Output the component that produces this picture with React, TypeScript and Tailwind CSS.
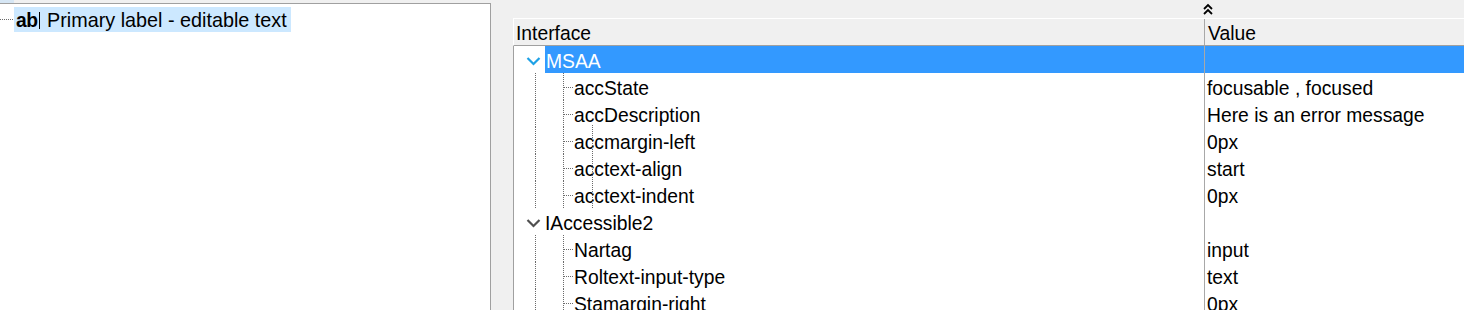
import React from "react";

const FONT = { fontFamily: '"Liberation Sans", Arial, sans-serif' };

function ChildLines() {
  return (
    <svg width="60" height="27" className="shrink-0 block">
      <line x1="21.5" y1="0" x2="21.5" y2="27" stroke="#6b6b6b" strokeWidth="1" strokeDasharray="1 1" />
      <line x1="49.5" y1="0" x2="49.5" y2="27" stroke="#6b6b6b" strokeWidth="1" strokeDasharray="1 1" />
      <line x1="50" y1="14.5" x2="59" y2="14.5" stroke="#6b6b6b" strokeWidth="1" strokeDasharray="1 1" />
    </svg>
  );
}

function ParentIcon({ color }: { color: string }) {
  return (
    <svg width="31" height="27" className="shrink-0 block">
      <polyline points="13.5,12 19.5,18 25.5,12" fill="none" stroke={color} strokeWidth="2.2" />
    </svg>
  );
}

const children1 = [
  ["accState", "focusable , focused"],
  ["accDescription", "Here is an error message"],
  ["accmargin-left", "0px"],
  ["acctext-align", "start"],
  ["acctext-indent", "0px"],
];
const children2 = [
  ["Nartag", "input"],
  ["Roltext-input-type", "text"],
  ["Stamargin-right", "0px"],
];

function ChildRow({ label, value }: { label: string; value: string }) {
  return (
    <div className="flex h-[27px] shrink-0 items-center">
      <ChildLines />
      <div className="w-[630px] shrink-0 pt-[5px] text-black">{label}</div>
      <div className="w-px h-full bg-[#a8a8a8] shrink-0" />
      <div className="pl-[2px] pt-[5px] text-black">{value}</div>
    </div>
  );
}

export default function App() {
  return (
    <div
      className="w-[1464px] h-[310px] bg-[#f0f0f0] overflow-hidden flex text-[19.3px] leading-none"
      style={FONT}
    >
      {/* Left panel */}
      <div className="w-[491px] shrink-0 flex flex-col">
        <div className="h-[3px] shrink-0 flex">
          <div className="w-[14px] bg-[#d6e6f4]" />
        </div>
        <div className="flex-1 bg-white border-t border-r border-[#a0a0a0] pt-[3px]">
          <div className="flex items-center h-[25px]">
            <svg width="14" height="25" className="shrink-0 block">
              <line x1="0" y1="12.5" x2="14" y2="12.5" stroke="#6b6b6b" strokeWidth="1" strokeDasharray="1 1" />
            </svg>
            <div className="h-full w-[277px] bg-[#cce8ff] flex items-center pl-[2px] pt-[2px]">
              <span className="font-bold tracking-[-0.5px]">ab</span>
              <span className="ml-[1px] w-[1.5px] h-[17px] bg-black" />
              <span className="ml-[7px] text-black text-[19.8px]">Primary label - editable text</span>
            </div>
          </div>
        </div>
      </div>

      <div className="w-[22px] shrink-0" />

      {/* Right panel */}
      <div className="flex-1 flex flex-col min-h-0">
        <div className="h-[18px] shrink-0 pl-[689px] pt-[3px]">
          <svg width="12" height="13" className="block">
            <polyline points="2,6 6,2 10,6" fill="none" stroke="#000" strokeWidth="1.8" />
            <polyline points="2,11 6,7 10,11" fill="none" stroke="#000" strokeWidth="1.8" />
          </svg>
        </div>
        <div className="h-[28px] shrink-0 flex border-t border-white border-b border-b-[#a0a0a0] bg-[#f0f0f0] border-l border-l-white">
          <div className="w-[690px] shrink-0 flex items-center pl-[2px] pt-[3px] text-black">Interface</div>
          <div className="w-px bg-[#a8a8a8] shrink-0" />
          <div className="flex items-center pl-[3px] pt-[3px] text-black">Value</div>
        </div>
        <div className="relative flex-1 min-h-0 overflow-hidden bg-white border-l border-[#a0a0a0]">
          {/* MSAA */}
          <div className="flex h-[27px] items-center">
            <ParentIcon color="#1ea1e6" />
            <div className="flex-1 h-full bg-[#3399ff] flex items-center text-white">
              <div className="w-[659px] shrink-0 pl-[1px] pt-[4px]">MSAA</div>
              <div className="w-px h-full bg-[#a8a8a8] shrink-0" />
            </div>
          </div>
          {children1.map(([l, v]) => (
            <ChildRow key={l} label={l} value={v} />
          ))}
          {/* IAccessible2 */}
          <div className="flex h-[27px] items-center">
            <ParentIcon color="#505050" />
            <div className="w-[659px] shrink-0 pt-[5px] text-black">IAccessible2</div>
            <div className="w-px h-full bg-[#a8a8a8] shrink-0" />
          </div>
          {children2.map(([l, v]) => (
            <ChildRow key={l} label={l} value={v} />
          ))}
          {/* overlapping guide line */}
          <div className="absolute left-[78px] top-[79px] h-[83px] border-l border-dotted border-[#6b6b6b]" />
        </div>
      </div>
    </div>
  );
}
